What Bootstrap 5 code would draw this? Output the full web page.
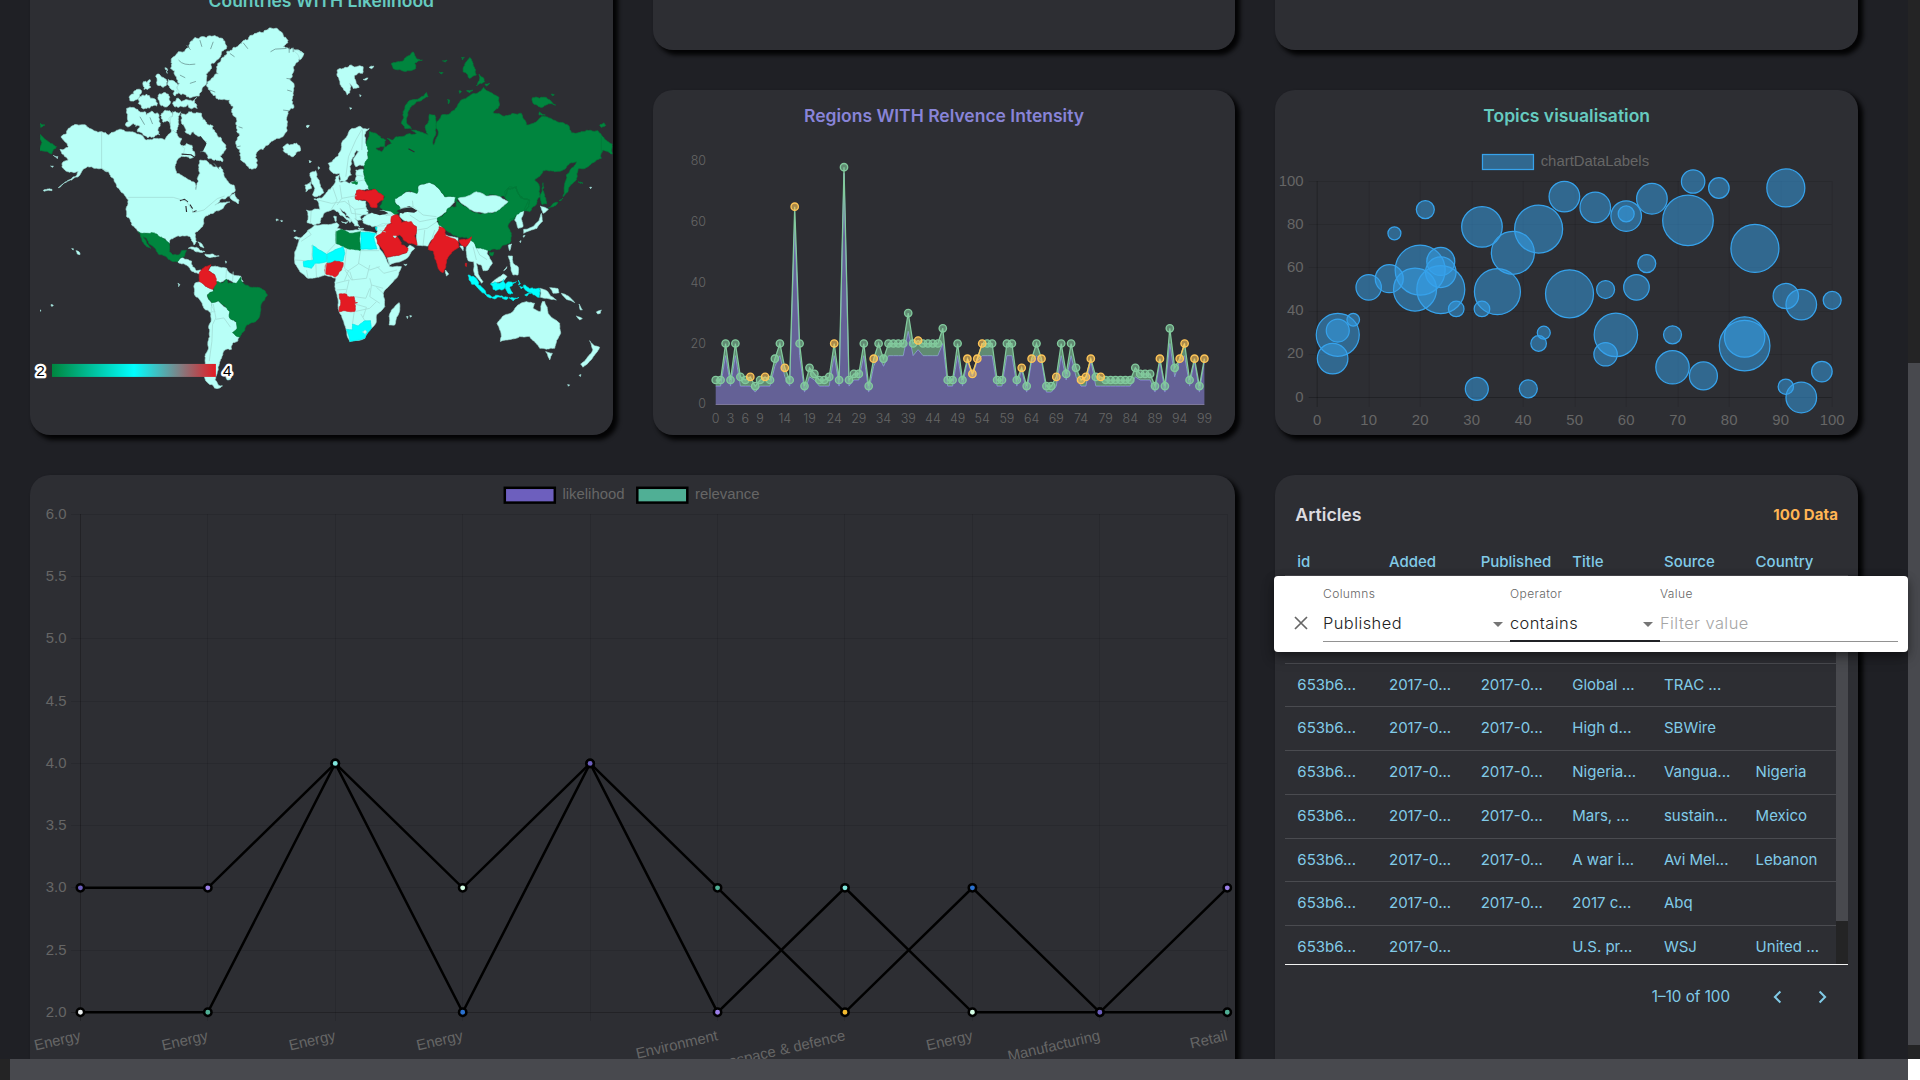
<!DOCTYPE html>
<html lang="en">
<head>
<meta charset="utf-8">
<meta name="viewport" content="width=device-width, initial-scale=1">
<title>Dashboard</title>
<link rel="stylesheet" href="https://cdn.jsdelivr.net/npm/bootstrap@5.3.0/dist/css/bootstrap.min.css">
<style>
body{background:#1f2025;font-family:Inter,"Liberation Sans",sans-serif;color:#dcdce0;overflow:hidden}
.shell{display:grid;grid-template:1059px 21px / 1908px 12px;width:1920px;height:1080px}
.board{display:grid;grid-template-columns:repeat(3,minmax(0,1fr));grid-template-rows:345px 345px 680px;gap:40px;margin-top:-295px;padding:0 50px 0 30px}
.panel{background:#2d2e33;border-radius:20px;box-shadow:4px 4px 4px 1px #040405;min-width:0}
.panel svg{display:block;width:100%}
.p-map{grid-row:span 2;height:460px;align-self:end}
.p-wide{grid-column:span 2}
.head{height:50px;line-height:52px;font-size:17.5px;font-weight:600;text-align:center}
.teal{color:#66cbc0}.violet{color:#8884d8}
.vbar{background:#242425}.vbar i{display:block;margin-top:363px;height:682px;background:#48494e}
.hbar{background:#242425}.hbar i{display:block;margin-left:10px;height:21px;background:#48494e}
.corner{background:#fff}
svg text{fill:#666}
.rc text{font:300 12.5px Inter,sans-serif}
.cj text{font:14.9px "Liberation Sans",Arial,sans-serif}
.art-top{height:81px;padding:0 20px 0 20px}
.art-top b{font-size:17.7px;font-weight:600}
.art-top span{font-size:15px;font-weight:700;letter-spacing:.1px;color:#ffb454}
.gridbox{margin:-5px 10px 0;color:#81cbe8;font-size:15px}
.g-row{display:grid;grid-template-columns:repeat(6,91.67px);padding-left:12px;align-items:center;white-space:nowrap;height:43.75px;border-bottom:1px solid #4a4b50}
.g-head{font-weight:500;height:20px;border:0;margin-bottom:4px}
.g-body{height:390px;border-top:1px solid #4a4b50;border-bottom:1px solid #f2f2f2;overflow:hidden}
.g-rows{width:551px;overflow:hidden}
.g-bar{width:12px;background:#242425}.g-bar i{display:block;height:345px;background:#48494e}
.g-foot{height:64px;padding-right:13px;font-size:15.2px}
.g-foot svg{width:24px;height:24px;flex:none;fill:none;stroke:#81cbe8;stroke-width:2;margin-left:22px}
.g-foot span+svg{margin-left:35px}
.filter-pop{position:absolute;left:1274px;top:576px;width:634px;height:76px;background:#fff;border-radius:4px;padding:9px 10px 0 18px;box-shadow:0 3px 8px rgba(0,0,0,.35),0 6px 14px rgba(0,0,0,.22)}
.filter-pop label{display:block;font-size:12px;line-height:17px;font-weight:300;letter-spacing:.4px;color:#666}
.f-val{height:40px;padding-top:6px;font-size:16.4px;font-weight:300;letter-spacing:.45px;line-height:30px;color:#222;border-bottom:1px solid #929292;display:flex;justify-content:space-between}
.f-val.on{border-bottom:2px solid #202125}
.f-val.ph{color:#a5a5a5}
.f-val i{align-self:center;border:5px solid transparent;border-top-color:#757575;border-bottom:0;margin-right:7px}
.f-col{width:187px}.f-op{width:150px}
.f-x{width:31px;padding-top:29px}
.f-x svg{display:block;width:18px;height:18px;stroke:#666;stroke-width:1.7}
</style>
<script src="https://cdn.jsdelivr.net/npm/bootstrap@5.3.0/dist/js/bootstrap.bundle.min.js"></script>
</head>
<body>
<div class="shell">
  <div class="overflow-hidden">
    <main class="board">
      <section class="panel p-map">
        <div class="head teal">Countries WITH Likelihood</div>
        <svg id="map" viewBox="90 75 1749 1230" height="410">
          <defs><linearGradient id="lg"><stop offset="0" stop-color="#00853e"/><stop offset=".5" stop-color="#0ff"/><stop offset="1" stop-color="#e31b23"/></linearGradient>
          <clipPath id="mc"><rect x="120" y="75" width="1719" height="1230"/></clipPath></defs>
          <g id="land" clip-path="url(#mc)" stroke-linejoin="round"></g>
          <rect x="156" y="1092" width="492" height="39" fill="url(#lg)"/>
          <g font-family="Liberation Sans" font-size="46" style="paint-order:stroke" stroke="#fff" stroke-width="14" stroke-linejoin="round">
            <text x="109" y="1127" style="fill:#000">2</text><text x="669" y="1127" style="fill:#000">4</text></g>
        </svg>
      </section>
      <section class="panel"></section>
      <section class="panel"></section>
      <section class="panel">
        <div class="head violet">Regions WITH Relvence Intensity</div>
        <svg id="area" class="rc" viewBox="653 140 582.67 295" height="295"></svg>
      </section>
      <section class="panel">
        <div class="head teal">Topics visualisation</div>
        <svg id="bubble" class="cj" viewBox="1275.33 140 582.67 295" height="295"></svg>
      </section>
      <section class="panel p-wide">
        <svg id="lines" class="cj" viewBox="30 475 1205.33 680" height="680"></svg>
      </section>
      <section class="panel">
        <div class="art-top d-flex justify-content-between align-items-center"><b>Articles</b><span>100 Data</span></div>
        <div class="gridbox">
          <div class="g-row g-head"><span>id</span><span>Added</span><span>Published</span><span>Title</span><span>Source</span><span>Country</span></div>
          <div class="g-body d-flex">
            <div class="g-rows flex-shrink-0" id="rows"></div>
            <div class="g-bar flex-grow-1"><i></i></div>
          </div>
          <div class="g-foot d-flex justify-content-end align-items-center">
            <span>1–10 of 100</span>
            <svg viewBox="0 0 24 24"><path d="M15.4 6.5 9.9 12l5.5 5.5"/></svg>
            <svg viewBox="0 0 24 24"><path d="M8.6 6.5l5.5 5.5-5.5 5.5"/></svg>
          </div>
        </div>
      </section>
    </main>
  </div>
  <div class="vbar"><i></i></div>
  <div class="hbar"><i></i></div>
  <div class="corner"></div>
</div>

<div class="filter-pop d-flex">
  <div class="f-x"><svg viewBox="0 0 18 18"><path d="M3 3l12 12M15 3L3 15"/></svg></div>
  <div class="f-col"><label>Columns</label><div class="f-val">Published<i></i></div></div>
  <div class="f-op"><label>Operator</label><div class="f-val on">contains<i></i></div></div>
  <div class="flex-grow-1"><label>Value</label><div class="f-val ph">Filter value</div></div>
</div>

<script>
const $=id=>document.getElementById(id);
// ---- article rows
const rows=[['','','','','',''],['','','','','',''],
['653b6...','2017-0...','2017-0...','Global ...','TRAC ...',''],['653b6...','2017-0...','2017-0...','High d...','SBWire',''],
['653b6...','2017-0...','2017-0...','Nigeria...','Vangua...','Nigeria'],['653b6...','2017-0...','2017-0...','Mars, ...','sustain...','Mexico'],
['653b6...','2017-0...','2017-0...','A war i...','Avi Mel...','Lebanon'],['653b6...','2017-0...','2017-0...','2017 c...','Abq',''],
['653b6...','2017-0...','','U.S. pr...','WSJ','United ...']];
$('rows').innerHTML=rows.map(r=>'<div class="g-row">'+r.map(c=>`<span>${c}</span>`).join('')+'</div>').join('');

// ---- area chart
{
const v=[8,8,20,8,20,9,8,9,6,8,9,8,15,20,12,8,65,20,6,12,10,8,8,9,20,8,78,8,10,10,20,6,15,20,15,20,20,20,20,30,20,21,20,20,20,20,25,8,8,20,8,15,10,15,20,20,20,8,8,20,20,8,12,6,15,20,15,6,6,9,20,10,20,12,8,9,15,9,9,8,8,8,8,8,8,12,10,10,10,6,15,6,25,12,15,20,8,15,6,15];
const yel=[7,10,14,16,24,32,41,51,52,53,54,62,64,66,69,74,75,76,78,90,94,95,97,99];
const low=n=>n>=78?76:n>=65?60:n==21?18:n==30?24:n==25?20:n==20?16:n==15?12.5:n==12?9:n==10?8:n==6?4:6;
const lo=v.map((n,i)=>yel.includes(i)&&i>50&&n>=10&&n<=15?n-.7:low(n));
const X=i=>(715.7+i*4.936).toFixed(1),Y=n=>(404.3-n*3.04).toFixed(1);
const top=v.map((n,i)=>X(i)+','+Y(n)),bot=lo.map((n,i)=>X(i)+','+Y(n));
let s=`<polygon points="${X(0)},${Y(0)} ${bot.join(' ')} ${X(99)},${Y(0)}" fill="#8884d8" fill-opacity=".6"/>
<polyline points="${bot.join(' ')}" fill="none" stroke="#8884d8"/>
<polygon points="${top.join(' ')} ${[...bot].reverse().join(' ')}" fill="#82ca9d" fill-opacity=".6"/>
<polyline points="${top.join(' ')}" fill="none" stroke="#82ca9d" stroke-width="1.25"/>
<path d="M${X(0)} 404.5H${X(99)}" stroke="#7d789b"/>`;
const dot=(i,c)=>`<circle cx="${X(i)}" cy="${Y(v[i])}" r="3.7" fill="${c}" fill-opacity=".6" stroke="${c}" stroke-width="1.35"/>`;
v.forEach((n,i)=>{if(!yel.includes(i))s+=dot(i,'#82ca9d')});
yel.forEach(i=>{if(yel.includes(i+1))s+=`<path d="M${X(i)} ${Y(v[i])}L${X(i+1)} ${Y(v[i+1])}" stroke="#ffc658" stroke-width="1.25"/>`});
yel.forEach(i=>s+=dot(i,'#ffc658'));
[0,3,6,9,14,19,24,29,34,39,44,49,54,59,64,69,74,79,84,89,94,99].forEach(n=>s+=`<text x="${X(n)}" y="423" text-anchor="middle">${n}</text>`);
[0,20,40,60,80].forEach(n=>s+=`<text x="706" y="${+Y(n)+4.1}" text-anchor="end">${n}</text>`);
$('area').innerHTML=s;
}
// ---- bubble chart
{
const b=[[4,29,21.5],[4,31,11.5],[3,18,15.3],[7,36,6.3],[10,51,12.7],[14,55,14],[15,76,6.5],[21,87,9],[20,59,25],[19,50,21.5],[24,50,24],[24,63,14],[24,58,15.3],[27,41,7.8],[32,41,7.8],[32,79,20.3],[35,49,23],[38,67,21.5],[43,78,24],[48,93,15.3],[31,4,11.5],[41,4,9],[43,25,7.8],[44,30,6.5],[49,48,24],[54,88,15.3],[60,84,15.3],[60,85,8],[65,92,15.3],[73,100,11.7],[78,97,10.3],[72,82,25.3],[91,97,19],[85,69,24],[64,62,9],[56,50,9],[62,51,12.8],[58,29,21.7],[56,20,11.7],[69,29,9],[69,14,16.7],[75,10,14],[83,24,25.3],[83,28,20.2],[91,47,12.7],[94,43,15.3],[100,45,9],[98,12,10.3],[91,5,7.7],[94,0,15.3]];
const X=n=>1317.5+n*5.15,Y=n=>397.5-n*2.16;let s='';
for(let n=0;n<=100;n+=10)s+=`<path d="M${Math.floor(X(n))+.5} 181V407" stroke="#000" stroke-opacity="${n?.1:.25}"/><text x="${X(n)}" y="425" text-anchor="middle">${n}</text>`;
for(let n=0;n<=100;n+=20)s+=`<path d="M1309 ${Math.floor(Y(n))+.5}H1832" stroke="#000" stroke-opacity="${n?.1:.25}"/><text x="1304" y="${Y(n)+4}" text-anchor="end">${n}</text>`;
b.forEach(p=>s+=`<circle cx="${X(p[0])}" cy="${Y(p[1])}" r="${p[2]}" fill="#36a2eb" fill-opacity=".5" stroke="#36a2eb" stroke-width="1.25"/>`);
s+=`<rect x="1482.8" y="154.5" width="51" height="15" fill="#36a2eb" fill-opacity=".5" stroke="#36a2eb" stroke-width="1.25"/><text x="1541" y="166">chartDataLabels</text>`;
$('bubble').innerHTML=s;
}
// ---- line chart
{
const X=i=>80.4+i*127.43,Y=n=>1012.3-(n-2)*124.45;let s='';
const lab=['Energy','Energy','Energy','Energy','','Environment','Aerospace & defence','Energy','Manufacturing','Retail'];
for(let i=0;i<10;i++)s+=`<path d="M${Math.floor(X(i))+.5} 514V1021" stroke="#000" stroke-opacity="${i?.1:.25}"/><text transform="translate(${X(i)+1} 1040) rotate(-13)" text-anchor="end">${lab[i].replace('&','&amp;')}</text>`;
for(let n=2;n<=6;n+=.5)s+=`<path d="M71 ${Math.floor(Y(n))+.5}H1227" stroke="#000" stroke-opacity="${n>2?.1:.25}"/><text x="66.5" y="${Y(n)+4.5}" text-anchor="end">${n.toFixed(1)}</text>`;
const P='#6d5fbe',L='#9b7fe8',A='#7fe5dc',M='#d5ffe6',G='#50af95',O='#f3ba2f',B='#2a71d0';
const S=[[[2,2,4,2,4,2,3,2,2,2],['#ecf0f1',G,A,B,P,L,A,M,P,G]],[[3,3,4,3,4,3,2,3,2,3],[P,L,A,M,P,G,O,B,P,L]]];
S.forEach(q=>s+=`<polyline points="${q[0].map((n,i)=>X(i)+','+Y(n)).join(' ')}" fill="none" stroke="#000" stroke-width="2.5"/>`);
S.forEach(q=>q[0].forEach((n,i)=>s+=`<circle cx="${X(i)}" cy="${Y(n)}" r="3.7" fill="${q[1][i]}" stroke="#000" stroke-width="2.5"/>`));
s+=`<g stroke="#000" stroke-width="2.5"><rect x="504.8" y="487.8" width="50" height="14.8" fill="${P}"/><rect x="637.3" y="487.8" width="50" height="14.8" fill="${G}"/></g><text x="562.5" y="499">likelihood</text><text x="695" y="499">relevance</text>`;
$('lines').innerHTML=s;
}
// ---- world map: outlines are roughened so that shared edges still meet
{
const hash=(a,b)=>{const t=Math.sin((a[0]+b[0])*12.9898+(a[1]+b[1])*78.233)*43758.5453;return t-Math.floor(t)-.5};
function rough(pts,amp){
  const out=[];
  for(let i=0;i<pts.length;i++)split(pts[i],pts[(i+1)%pts.length],out,amp,3);
  return out;
}
function split(a,b,out,amp,d){
  const flip=a[0]>b[0]||(a[0]==b[0]&&a[1]>b[1]),dx=b[0]-a[0],dy=b[1]-a[1],len=Math.hypot(dx,dy);
  if(!d||len<6){out.push(a);return}
  const h=hash(a,b)*amp*(flip?-1:1),m=[(a[0]+b[0])/2-dy*h,(a[1]+b[1])/2+dx*h];
  split(a,m,out,amp,d-1);split(m,b,out,amp,d-1);
}
const W=['#b8fff7','#a2ddd6'],G=['#00853e','#007a39'],C=['#00ffff','#00e6e6'],R=['#e31b23','#cc1820'];
// [style, x offset, roughness, outlines]
const land=[
[W,0,.55,`740,120 760,105 800,90 835,88 850,105 864,128 850,140 880,145 911,162 895,185 880,200 870,235 882,250 878,290 882,318 865,340 862,390 835,415 810,428 790,448 778,450 772,480 764,505 738,492 722,460 712,420 720,405 710,385 705,350 700,320 690,300 655,298 635,280 625,262 623,245 640,232 655,222 650,200 662,185 680,155 700,142 720,132
535,155 570,130 585,112 630,107 668,115 678,135 665,155 650,180 635,205 618,222 610,260 598,288 560,290 540,280 530,262 540,250 525,225 512,205 515,175 528,165
530,295 560,298 590,292 592,325 535,322 518,310
472,222 490,232 500,250 490,262 472,255
430,245 450,238 452,262 432,268
388,290 410,268 425,272 405,300 390,302
415,295 440,282 468,300 470,318 440,325 415,310
475,290 505,282 512,305 490,318 480,312
505,238 525,245 535,270 525,288 508,258
495,203 503,208 502,220
376,375 380,325 400,322 420,335 440,345 472,338 478,360 475,385 480,405 455,412 430,405 412,395 420,378 400,370 390,378
485,340 510,332 515,350 510,370 488,365
518,335 542,335 535,365 530,395 515,400 512,380
545,340 575,335 605,340 615,360 640,378 645,395 665,420 678,435 672,455 660,468 668,485 640,480 620,462 600,455 612,440 620,425 598,410 580,395 570,405 555,395 545,370
540,440 560,430 585,462 570,475 545,468
850,440 870,435 895,435 902,452 880,470 865,465 850,452`],
[W,0,.3,`183,410 200,400 205,385 232,374 265,382 305,395 325,405 345,395 365,388 390,395 415,402 440,420 470,415 495,420 510,400 520,390 535,410 545,415 540,430 555,445 550,460 535,475 525,500 530,520 560,535 585,548 588,570 595,545 600,520 596,495 600,480 620,482 640,500 655,505 662,500 672,520 685,545 702,555 705,575 690,588 660,600 645,615 665,608 690,606 670,625 650,632 640,640 615,650 612,670 600,688 585,698 590,725 582,735 572,712 545,708 525,712 512,718 508,730 495,715 470,703 440,700 415,695 395,675 380,650 380,620 385,600 370,580 350,560 340,535 325,515 305,505 285,505 262,500 245,515 215,540 175,563 200,545 225,530 235,515 208,517 186,500 190,485 205,480 185,460 180,448 205,440 195,425
690,590 705,580 718,600 715,612 700,602
533,785 545,772 555,778 575,783 578,800 590,812 603,810 605,822 585,818 570,805 560,795
565,745 590,742 615,755 600,757 580,748
615,762 640,762 658,768 635,772 618,768
594,725 606,732 612,744 600,738
228,752 238,756 240,764 232,762
215,746 220,746 220,750
130,571 156,568 156,572 132,574
160,466 174,470 172,476
152,498 160,498 158,502
919,378 928,376 922,384
829,657 836,660 830,663
842,662 848,662 846,666
534,850 540,854 536,860
114,930 122,930 122,934
153,914 160,916 156,920
676,783 680,785 678,790
633,800 660,802 680,805 695,822 722,828 730,845 700,848 680,838 660,850 645,845 645,825 625,812
598,845 620,860 638,868 640,875 622,885 635,908 645,935 632,938 610,920 600,900 583,878 585,850
635,908 655,902 665,912 690,935 690,955 710,968 712,985 698,998 718,1012 712,1025 698,1030 695,1048 672,1052 665,1075 655,1100 650,1125 645,1140 655,1155 668,1158 645,1165 625,1150 612,1130 620,1100 615,1070 625,1040 628,1000 634,960 632,938
678,1132 692,1130 692,1138 682,1140
882,690 888,692 884,696
882,713 900,713 898,718
928,482 934,484 930,488`],
[G,0,.25,`415,695 440,700 470,702 490,715 508,732 508,755 518,765 535,765 545,752 560,752 553,770 540,775 533,785 505,778 475,762 465,745 440,715 430,710 440,730 453,745 440,740 425,715
640,852 655,845 665,850 680,838 685,850 710,850 722,832 735,855 765,862 795,872 803,885 783,915 780,945 770,962 740,975 735,990 720,1012 698,998 712,985 710,968 690,955 690,935 665,912 655,902 635,908 622,885 640,875
120,370 135,375 122,382
120,403 145,425 170,440 155,462 120,452`],
[R,0,.2,`600,815 615,800 633,794 625,812 645,825 650,850 638,868 620,860 598,845`],
[W,900,.35,`112,210 130,205 150,195 190,200 188,220 165,225 178,262 160,265 150,250 142,285 130,265 118,240
190,238 205,234 200,240
208,202 222,198 214,206
20,378 28,376 24,382
-20,152 12,160 0,180
150,322 156,324 152,328
179,284 184,286 181,290
28,482 34,484 30,488
55,500 60,504 56,508
30,520 48,512 50,530 62,560 72,578 50,590 38,585 45,565 35,545
15,555 32,545 35,565 18,575
85,490 105,475 120,455 125,430 145,400 175,380 208,385 195,410 205,440 207,475 195,498 168,500 160,480 178,455 170,450 155,480 150,500 155,525 135,545 120,545 118,520 100,520 90,510
20,630 60,628 55,605 42,597 70,590 85,570 105,550 108,530 118,525 118,545 150,550 165,545 168,510 190,508 195,530 212,550 208,568 170,572 168,598 198,603 200,625 205,640 180,650 185,660 165,655 180,680 165,678 150,655 135,635 120,625 130,640 155,660 150,668 120,645 105,630 90,632 70,645 62,668 40,675 22,668
125,665 145,665 138,672
102,648 110,650 108,665
175,684 192,686 180,690
188,655 200,645 230,640 270,642 295,650 280,665 265,672 235,678 205,675 190,668
240,632 290,635 290,650 260,646
230,680 265,672 258,700 228,708`],
[W,900,.15,`0,715 25,690 45,675 110,668 118,675 112,685 150,692 180,690 228,700 232,718 240,748 262,785 270,800 305,800 290,835 250,880 255,920 230,945 228,970 215,985 195,1015 150,1025 138,985 118,935 115,900 105,860 108,835 75,825 50,832 25,835 0,815 -15,790 -15,755
262,772 300,765 322,758 325,740 330,735 345,745 325,772 270,795
298,908 300,930 285,975 268,975 268,950 275,930
312,793 322,793 318,797
320,950 325,950 323,956
330,947 336,948 332,952
285,595 300,588 320,575 352,580 355,558 388,547 410,560 435,590 470,590 465,605 440,635 415,655 410,665 430,680 415,710 395,720 385,738 350,735 350,680 320,665 300,650 302,625 285,605
650,640 672,632 665,655 670,680 655,685 645,660
722,618 746,628 730,640
725,640 728,665 712,685 690,692 672,700 672,688 700,680 718,662
670,708 676,706 672,712
660,724 664,722 662,728
626,735 636,732 630,752
437,810 447,822 440,828
437,704 475,713 475,726 437,714
480,738 490,738 490,752
500,740 520,712 530,745 545,745 565,745 562,760 578,790 565,810 550,812 545,795 530,790 535,820 550,845 545,850 525,825 522,785 505,782
575,850 610,822 622,830 612,842
722,865 745,875 752,888 770,900 740,895 722,892
750,863 775,866 778,878 760,880
785,880 805,888 825,908 800,898
838,912 848,930 842,930
830,948 848,956 840,960
890,936 905,930 902,940 894,942
625,768 638,768 640,790 655,800 655,825 640,825 632,795
612,812 622,800 620,806
592,970 608,950 640,935 655,915 680,905 705,910 700,925 722,935 728,905 735,905 745,940 780,970 783,1000 765,1045 740,1048 720,1045 705,1025 690,1010 660,1010 635,1018 602,1025 605,1010
738,1055 758,1060 750,1080
870,1022 885,1038 900,1042 885,1065 850,1102 843,1092 865,1070 880,1050
838,1126 844,1124 842,1130
804,1154 810,1155 806,1159
870,562 876,562 873,566`],
[G,900,.3,`208,395 235,405 258,420 255,440 228,445 245,455 265,435 275,430 262,415 280,420 290,410 325,402 350,400 335,390 370,398 385,405 378,375 390,342 405,345 410,375 400,435 415,405 408,375 425,345 465,330 475,312 505,290 530,280 552,262 575,278 598,292 595,325 580,338 605,345 640,340 665,340 680,375 700,370 725,350 760,360 808,378 815,398 850,395 895,392 905,405 925,425 938,432 938,462 910,450 905,475 890,480 865,500 838,505 830,540 805,575 790,590 795,555 800,525 815,505 830,485 810,490 790,510 765,515 730,512 705,540 720,560 722,590 708,615 690,635 675,632 690,600 665,590 650,560 625,565 615,590 600,590 560,588 530,575 475,595 465,605 470,590 435,590 410,560 388,547 355,558 352,580 320,575 300,588 285,595 285,605 302,625 290,645 240,622 255,590 225,568 208,568 195,530 192,500 205,475 200,430
730,548 735,590 740,612 728,614 727,575
745,626 775,608 760,620
778,602 790,594 784,602
305,370 310,335 335,300 380,277 385,290 350,305 328,330 320,360 335,385 315,385
490,205 510,172 520,195 530,225 510,235 490,215
485,172 494,172 488,180
530,258 538,222 555,245
556,252 570,250 560,258
698,293 740,292 768,315 745,312 725,322 702,312
720,335 737,345 718,345
755,282 764,284 758,287
275,190 300,185 320,170 340,155 350,175 368,180 345,190 348,205 300,208 280,205
428,182 442,180 436,186
418,216 430,217 424,222
443,298 450,300 446,312
478,272 485,274 480,280
500,272 520,270 510,278
900,375 912,368 918,376 906,382
835,545 850,550 842,550
155,548 172,543 172,553
470,600 485,612 510,628 555,640 600,628 625,605 615,590 625,565 650,560 665,590 690,600 675,632 650,645 630,660 645,655 625,675 635,700 630,730 600,748 570,752 545,745 530,745 520,725 500,712 470,708 435,690 412,655 440,638 445,625 470,620
570,757 582,757 578,768 570,765`],
[W,900,.15,`475,595 530,575 560,588 600,590 625,605 600,628 555,640 510,628 485,610`],
[G,900,.1,`108,695 125,688 150,700 182,695 182,752 140,745 108,730`],
[C,900,.1,`183,697 228,700 222,712 232,747 183,747
37,735 80,762 80,785 45,790 35,805 12,800 10,785 40,780
82,762 130,740 135,760 130,782 95,790 82,788
140,988 158,990 158,972 175,978 195,962 212,962 215,985 195,1015 150,1025
226,682 232,682 230,692`],
[C,900,.4,`505,825 525,832 555,870 560,885 540,870
556,882 600,888 625,892 622,898 590,895
628,893 658,892 640,903
572,852 600,850 612,838 618,855 605,870 580,868
620,850 650,845 630,862 640,880 625,880
655,840 662,850 656,855
660,858 672,860 664,866
672,855 690,866 720,865 720,892 700,884 680,872
675,885 695,880 680,888`],
[R,900,.25,`170,572 205,572 225,568 235,578 252,588 250,600 232,610 232,622 212,620 200,602 168,598
228,712 245,700 262,675 275,670 275,650 295,645 305,668 335,665 350,680 352,735 325,730 300,705 290,708 305,735 325,745 320,758 300,765 262,772 245,745
385,748 388,735 395,722 410,700 418,680 435,688 437,708 475,725 478,742 455,760 440,780 430,818 415,805 405,775 402,755
478,720 515,710 510,725 498,740 485,735
497,790 501,790 500,800 497,798
80,790 130,788 125,810 105,832 78,822
118,882 140,882 145,890 163,890 165,908 173,908 165,912 165,935 118,935`],
[W,900,.2,`188,996 196,990 201,996 196,1003
280,708 290,708 286,714`]];
let s='';
land.forEach(([c,ox,amp,txt])=>{
  const d=txt.split('\n').map(l=>'M'+rough(l.trim().split(' ').map(p=>{const q=p.split(',');return[+q[0]+ox,+q[1]]}),amp).map(p=>p[0].toFixed(1)+' '+p[1].toFixed(1)).join('L')+'Z').join('');
  s+=`<path d="${d}" fill="${c[0]}" stroke="${c[1]}" stroke-width="2"/>`;
});
// lakes and inland seas
s+=`<g fill="none" stroke="#2d2e33" stroke-width="3.5"><path d="M540 602l14-4 10 8M558 618l2 18M570 614l8 12M578 636l12-4M545 462l28 2 12 8M555 405l10 25M580 400l8 22 10 22 18-8M1226 446l18 10"/></g>
<path d="M1098 632q18 14 30-2l24 2 14 8-26 6z" fill="#2d2e33"/><path d="M582 420l20-12 18 22-10 22-22 8-10-20z" fill="#2d2e33"/><path d="M1197 640l6-14 26-8 24 14-10 6-20-2z" fill="#2d2e33"/><path d="M1190 634l6-5 20 4-6 8z" fill="#2d2e33"/>`;
// fjords
s+=`<g fill="none" stroke="#6f9a97" stroke-width="2.5"><path d="M536 180q14 18 50 12M812 155l14-8 34-2M868 142v16M880 142v14M642 490l16 18M730 128l14 18M560 135l12 14M600 120l6 20M640 125l-8 22M540 225l16 8M570 250l18-6M860 235l14 2M862 270l14 4M850 330l16 2M716 380l12 4M712 440l10-2M420 350l14 24M450 352l8 20M630 270l16 6M690 160l14 10"/></g>`;
// country borders
s+=`<g fill="none" stroke="#a2ddd6" stroke-width="2.4"><path d="M305 395V505l20 10M385 592H520l40 12 22 34 30-8 40-34 22-8M640 912l8 42-10 20-2 50-8 60M648 958l24 -4 20 28M680 805l-2 30M700 815l-2 30"/>
<g transform="translate(900)"><path d="M24 690l10 14-30 20M38 735l-2 45M108 690v40l-28 30M140 745l-6 60 14 10M182 752h56M182 752l-6 40-30 20-12 30M176 790l34 20 30-10M135 810l20 30 45-5 10-40M210 835l5 20 35 10M215 855l-5 35 30 20M108 850l40-10-10 42M163 890l35 5 12-30M165 935l45-10 20-20M165 912l35 10-10 30M158 972l5-35M195 962l-12-20M50 832l-2-40M75 825l4-35M25 835l-5-25M-15 780l30 2M250 880l-20-18M232 800l20 20 40-10M150 815l8 25M110 870l30-2"/>
<path d="M138 530l8-60 22-50 20-35M188 390l-2 60M98 560l14 40-20 32M120 555l6 40 44-8M55 600l40 10 40-6 30 24 34-4M126 595l-14 20M145 600l10 40 30 4M165 628l4 28M168 525l24 4M168 545l28-6M34 632l-2 36"/>
<path d="M300 625l40-5 30 25 40 5M340 620l-2 -18M330 645l30 20 50-10M352 690l30 -5 30-20M375 690l-5 45M395 720l10-30M530 745l10 20 22 14M520 740l10 40M272 795l-8-20M240 690l18 6"/></g></g>
<g fill="none" stroke="#007a39" stroke-width="2.4"><path d="M1517 594l-2-20 14-14 20 4 14 30 24 6-14 30M1805 410v46"/></g>`;
$('land').innerHTML=s;
}
</script>
</body>
</html>
